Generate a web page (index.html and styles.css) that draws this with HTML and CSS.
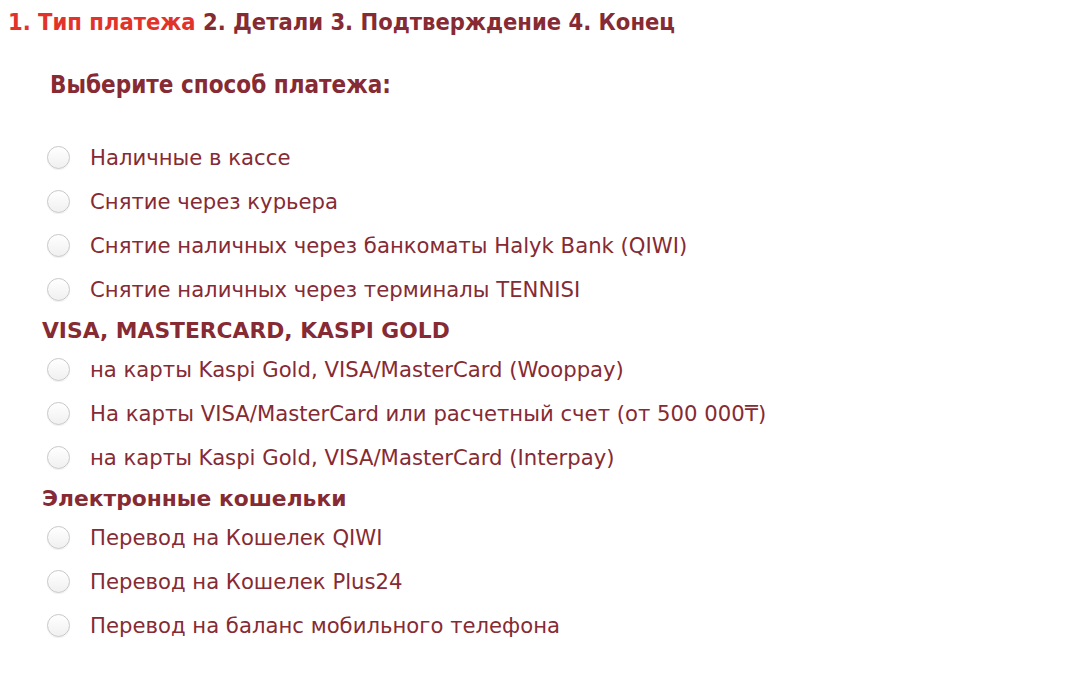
FILE: index.html
```html
<!DOCTYPE html>
<html lang="ru">
<head>
  <meta charset="UTF-8">
  <title>Тип платежа</title>
  <link rel="stylesheet" href="styles.css">
</head>
<body>
  <div class="steps">
    <span class="active">1. Тип платежа</span>
    <span>2. Детали</span>
    <span>3. Подтверждение</span>
    <span>4. Конец</span>
  </div>

  <h2 class="title">Выберите способ платежа:</h2>

  <form class="methods">
    <label class="method"><input type="radio" name="pay"><span>Наличные в кассе</span></label>
    <label class="method"><input type="radio" name="pay"><span>Снятие через курьера</span></label>
    <label class="method"><input type="radio" name="pay"><span>Снятие наличных через банкоматы Halyk Bank (QIWI)</span></label>
    <label class="method"><input type="radio" name="pay"><span>Снятие наличных через терминалы TENNISI</span></label>

    <h3 class="group">VISA, MASTERCARD, KASPI GOLD</h3>
    <label class="method"><input type="radio" name="pay"><span>на карты Kaspi Gold, VISA/MasterCard (Wooppay)</span></label>
    <label class="method"><input type="radio" name="pay"><span>На карты VISA/MasterCard или расчетный счет (от 500 000₸)</span></label>
    <label class="method"><input type="radio" name="pay"><span>на карты Kaspi Gold, VISA/MasterCard (Interpay)</span></label>

    <h3 class="group">Электронные кошельки</h3>
    <label class="method"><input type="radio" name="pay"><span>Перевод на Кошелек QIWI</span></label>
    <label class="method"><input type="radio" name="pay"><span>Перевод на Кошелек Plus24</span></label>
    <label class="method"><input type="radio" name="pay"><span>Перевод на баланс мобильного телефона</span></label>
  </form>
</body>
</html>
```

FILE: styles.css
```css
body {
  font-family: 'DejaVu Sans', Verdana, sans-serif;
  color: #862a33;
  background: #fff;
  margin: 0;
  padding: 0;
}
.steps {
  font-family: 'DejaVu Sans Condensed', 'DejaVu Sans', sans-serif;
  font-weight: bold;
  font-size: 23.5px;
  padding: 8px 0 0 8px;
  line-height: 28px;
}
.steps .active {
  color: #e2332b;
}
.title {
  font-family: 'DejaVu Sans Condensed', 'DejaVu Sans', sans-serif;
  font-size: 24px;
  font-weight: bold;
  margin: 35px 0 0 50px;
  line-height: 28px;
}
.methods {
  margin-top: 36px;
  padding-left: 42px;
}
.method {
  display: flex;
  align-items: center;
  height: 44px;
  font-size: 21.2px;
  cursor: pointer;
}
.method input {
  appearance: none;
  -webkit-appearance: none;
  width: 23px;
  height: 23px;
  margin: 0 20px 0 5px;
  border: 1px solid #c8c8c8;
  border-radius: 50%;
  background: linear-gradient(#ffffff, #f0f0f0);
  box-shadow: 0 1px 1px rgba(0, 0, 0, 0.06);
}
.group {
  font-size: 21.8px;
  font-weight: bold;
  margin: 0;
  padding-top: 3px;
  line-height: 33px;
}
```
